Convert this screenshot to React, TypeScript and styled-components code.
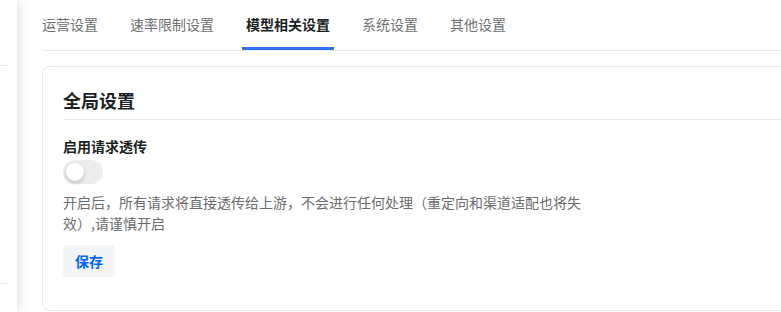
import React, { useState } from "react";
import styled, { createGlobalStyle } from "styled-components";

const GlobalStyle = createGlobalStyle`
  body {
    margin: 0;
    background: #ffffff;
    font-family: "Noto Sans CJK SC", "Noto Sans", sans-serif;
    color: #1c1f23;
  }
`;

const tabs = ["运营设置", "速率限制设置", "模型相关设置", "系统设置", "其他设置"];

const App: React.FC = () => {
  const [active, setActive] = useState(2);
  const [passThrough, setPassThrough] = useState(false);

  return (
    <>
      <GlobalStyle />
      <Page>
        <Sidebar>
          <SideBlock $h={65} />
          <SideLine />
          <SideBlock $h={217} />
          <SideLine />
        </Sidebar>
        <Main>
          <TabBar>
            {tabs.map((t, i) => (
              <Tab key={t} $active={i === active} onClick={() => setActive(i)}>
                {t}
              </Tab>
            ))}
          </TabBar>
          <Card>
            <CardTitle>全局设置</CardTitle>
            <Field>
              <Label>启用请求透传</Label>
              <Switch
                $on={passThrough}
                onClick={() => setPassThrough(!passThrough)}
              >
                <Knob $on={passThrough} />
              </Switch>
              <Extra>
                开启后，所有请求将直接透传给上游，不会进行任何处理（重定向和渠道适配也将失效）,请谨慎开启
              </Extra>
            </Field>
            <SaveButton>保存</SaveButton>
          </Card>
        </Main>
      </Page>
    </>
  );
};

export default App;

const Page = styled.div`
  display: flex;
  width: 100vw;
  height: 312px;
  overflow: hidden;
`;

const Sidebar = styled.div`
  width: 17px;
  flex-shrink: 0;
  padding-right: 8px;
  box-sizing: border-box;
  background: #ffffff;
  box-shadow: 3px 0 8px rgba(0, 0, 0, 0.1);
  z-index: 1;
`;

const SideBlock = styled.div<{ $h: number }>`
  height: ${(p) => p.$h}px;
`;

const SideLine = styled.div`
  height: 1px;
  background: #e8e8e8;
`;

const Main = styled.div`
  flex: 1;
  min-width: 820px;
  padding-left: 25px;
`;

const TabBar = styled.div`
  display: flex;
  gap: 32px;
  border-bottom: 1px solid #ececec;
`;

const Tab = styled.div<{ $active: boolean }>`
  position: relative;
  padding: 13px 0 15px;
  font-size: 14px;
  line-height: 22px;
  cursor: pointer;
  color: ${(p) => (p.$active ? "#1c1f23" : "#707172")};
  font-weight: ${(p) => (p.$active ? 600 : 400)};

  &::after {
    content: "";
    display: ${(p) => (p.$active ? "block" : "none")};
    position: absolute;
    left: -4px;
    right: -4px;
    bottom: 0;
    height: 3px;
    background: #2f6ff0;
  }
`;

const Card = styled.div`
  margin-top: 15px;
  border: 1px solid #e8e8e8;
  border-radius: 8px;
  padding: 20px 20px 33px;
`;

const CardTitle = styled.div`
  font-size: 18px;
  line-height: 26px;
  font-weight: 700;
  color: #1c1f23;
  padding-bottom: 6px;
  border-bottom: 1px solid #e8e8e8;
`;

const Field = styled.div`
  margin-top: 16px;
`;

const Label = styled.div`
  font-size: 14px;
  line-height: 20px;
  font-weight: 600;
  color: #1c1f23;
`;

const Switch = styled.div<{ $on: boolean }>`
  position: relative;
  margin-top: 4px;
  width: 40px;
  height: 24px;
  border-radius: 12px;
  background: ${(p) => (p.$on ? "#0064fa" : "#ededee")};
  cursor: pointer;
`;

const Knob = styled.div<{ $on: boolean }>`
  position: absolute;
  top: 3px;
  left: ${(p) => (p.$on ? "19px" : "3px")};
  width: 18px;
  height: 18px;
  border-radius: 50%;
  background: #ffffff;
  box-shadow: 0 2px 4px rgba(0, 0, 0, 0.2);
`;

const Extra = styled.div`
  margin-top: 8px;
  max-width: 528px;
  font-size: 14px;
  line-height: 21px;
  color: #6b6c6e;
`;

const SaveButton = styled.div`
  margin-top: 11px;
  width: fit-content;
  height: 32px;
  padding: 0 12px;
  display: flex;
  align-items: center;
  border-radius: 4px;
  background: #f3f4f5;
  color: #0064fa;
  font-size: 14px;
  font-weight: 600;
  cursor: pointer;
`;
